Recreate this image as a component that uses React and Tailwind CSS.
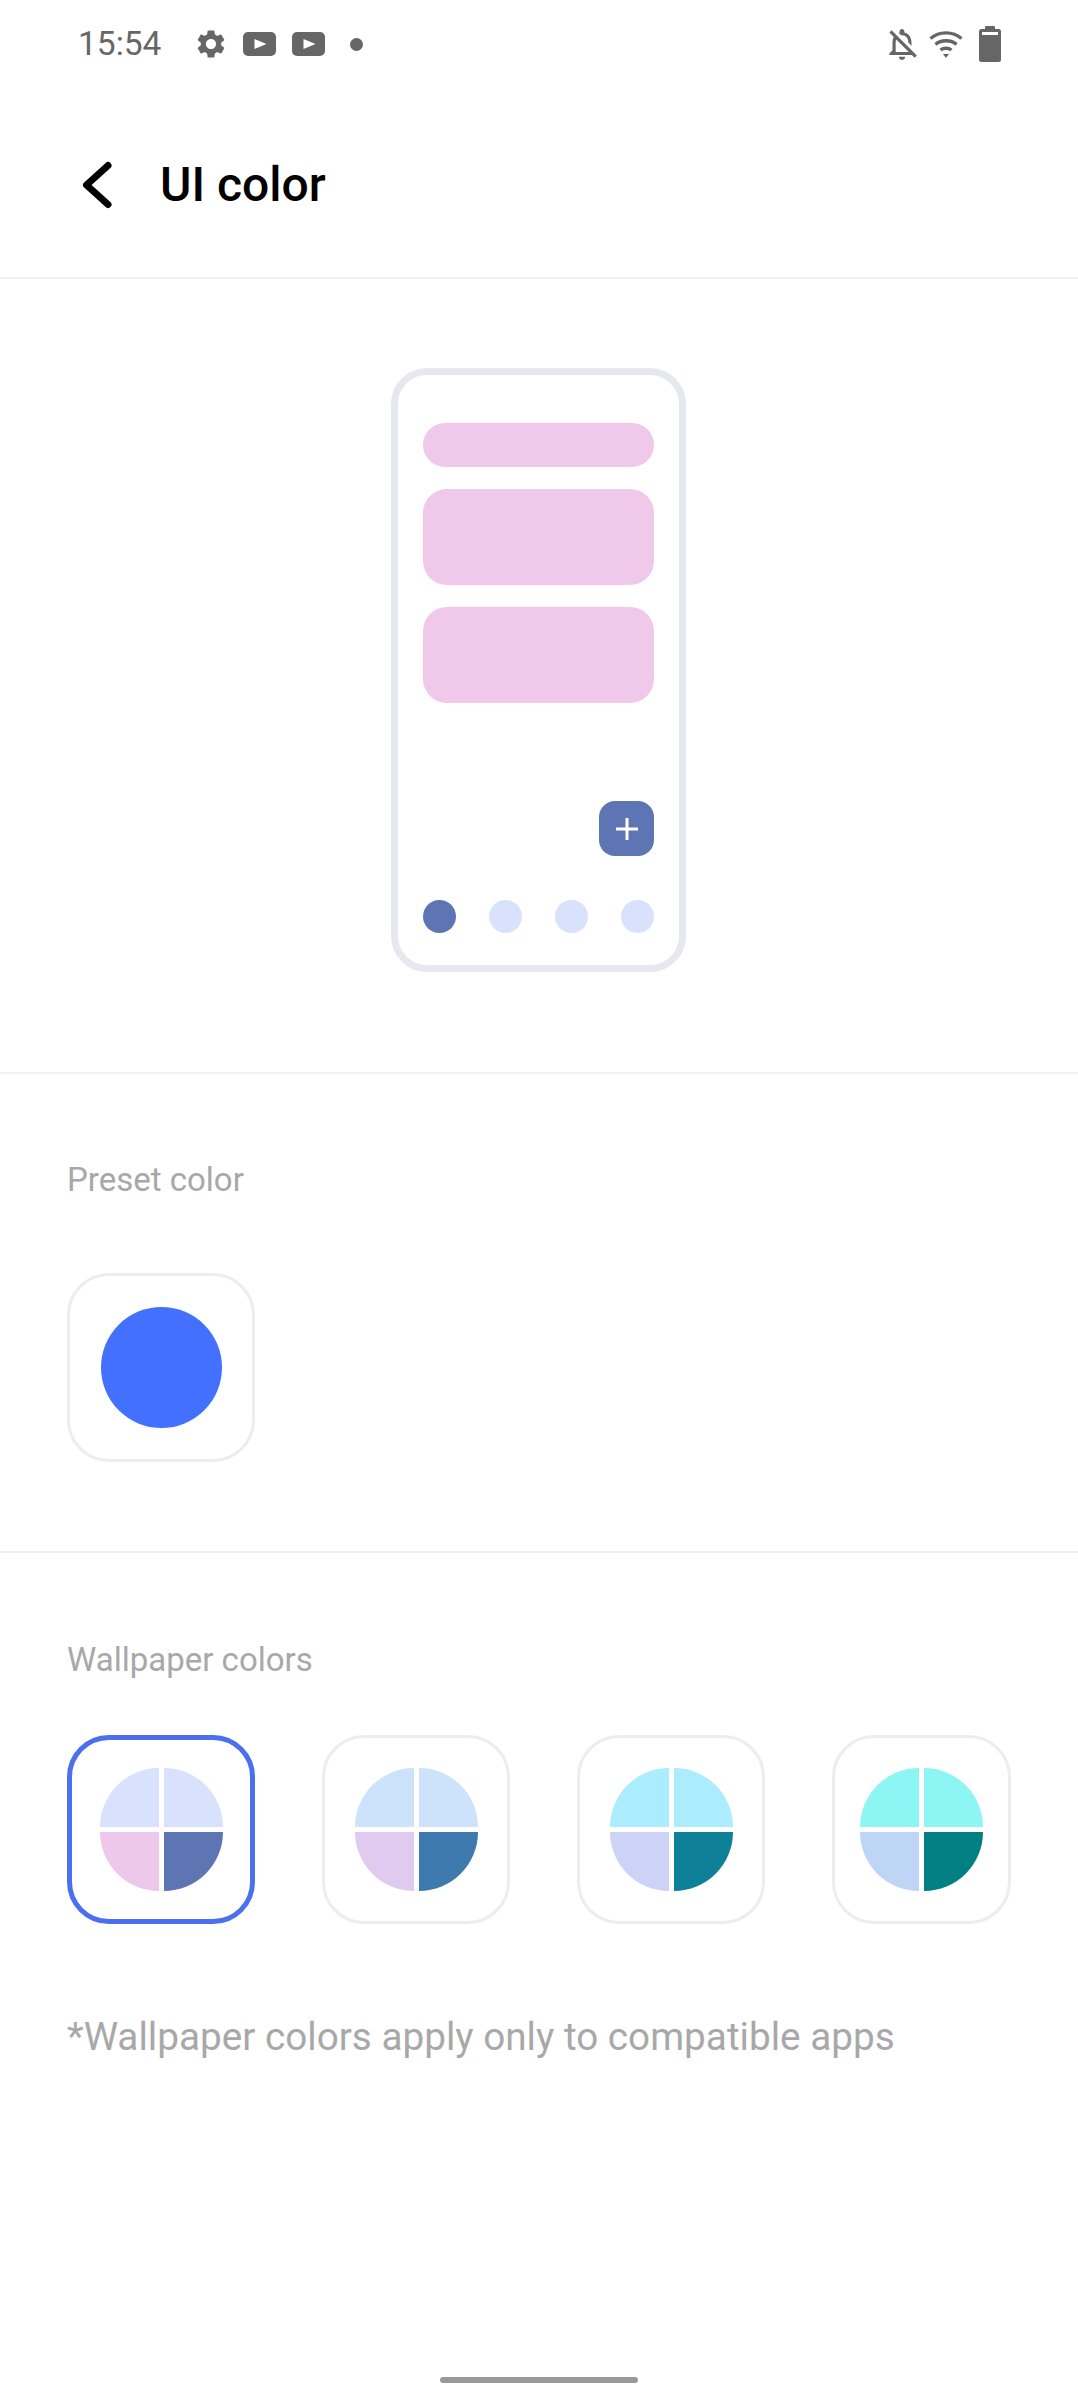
import { MdSettings, MdOutlineNotificationsOff } from "react-icons/md";

const wallpapers = [
  { top: "bg-[#d9e2fd]", left: "bg-[#eec8ea]", dark: "bg-[#5d75b2]" },
  { top: "bg-[#cde3fc]", left: "bg-[#e0caf0]", dark: "bg-[#3f7aae]" },
  { top: "bg-[#abecfe]", left: "bg-[#cdd2f7]", dark: "bg-[#0e8098]" },
  { top: "bg-[#8ef5f5]", left: "bg-[#bfd5f6]", dark: "bg-[#008083]" },
];

function YoutubeIcon() {
  return (
    <svg width="33" height="24" viewBox="0 0 33 24">
      <rect width="33" height="24" rx="5" fill="#666666" />
      <path d="M11.5 7 L23.5 12 L11.5 17 Z" fill="#ffffff" />
    </svg>
  );
}

function WifiIcon() {
  return (
    <svg width="34" height="30" viewBox="0 0 34 30" fill="none" stroke="#666666" strokeWidth="3.4">
      <path d="M1.5 9.5 C10 2 24 2 32.5 9.5" />
      <path d="M6.5 15.5 C12 10.5 22 10.5 27.5 15.5" />
      <path d="M11.5 21 C14.5 18.6 19.5 18.6 22.5 21" />
      <path d="M14 25 L20 25 L17 29 Z" fill="#666666" stroke="none" />
    </svg>
  );
}

function BatteryIcon() {
  return (
    <svg width="22" height="36" viewBox="0 0 22 36">
      <rect x="6" y="0" width="10" height="5" rx="1" fill="#666666" />
      <rect x="0" y="3" width="22" height="33" rx="2.5" fill="#666666" />
      <rect x="3" y="6" width="16" height="3" fill="#ffffff" />
    </svg>
  );
}

function StatusBar() {
  return (
    <div className="flex h-[88px] items-center pl-[78px] pr-[77px] text-[#666666]">
      <span className="w-[116px] text-[33.5px] leading-none">15:54</span>
      <div className="flex items-center">
        <MdSettings className="h-[34px] w-[34px] text-[#666666]" />
        <div className="ml-[15px] flex items-center gap-[16px]">
          <YoutubeIcon />
          <YoutubeIcon />
        </div>
        <div className="ml-[25px] h-[13px] w-[13px] rounded-full bg-[#666666]" />
      </div>
      <div className="ml-auto flex items-center">
        <MdOutlineNotificationsOff className="h-[38px] w-[38px] text-[#666666]" />
        <div className="ml-[8px]">
          <WifiIcon />
        </div>
        <div className="ml-[16px]">
          <BatteryIcon />
        </div>
      </div>
    </div>
  );
}

function Pie({ colors }) {
  return (
    <div className="grid h-[123px] w-[123px] grid-cols-2 gap-[5px]">
      <div className={`rounded-tl-full ${colors.top}`} />
      <div className={`rounded-tr-full ${colors.top}`} />
      <div className={`rounded-bl-full ${colors.left}`} />
      <div className={`rounded-br-full ${colors.dark}`} />
    </div>
  );
}

function Swatch({ selected, narrow, children }) {
  return (
    <div
      className={`flex h-[189px] items-center justify-center rounded-[42px] ${narrow ? "w-[179px]" : "w-[188px]"} ${
        selected ? "border-[5px] border-[#4a70f0]" : "border-[3px] border-[#ededed]"
      }`}
    >
      {children}
    </div>
  );
}

function PhonePreview() {
  return (
    <div className="mr-[1px] flex h-[604px] w-[295px] flex-col rounded-[36px] border-[7px] border-[#e6e8ef] px-[25px] pt-[48px]">
      <div className="h-[44px] rounded-[22px] bg-[#efc8ea]" />
      <div className="mt-[22px] h-[96px] rounded-[24px] bg-[#efc8ea]" />
      <div className="mt-[22px] h-[96px] rounded-[24px] bg-[#efc8ea]" />
      <div className="mt-[98px] flex h-[55px] w-[55px] items-center justify-center self-end rounded-[16px] bg-[#5d75b2]">
        <svg width="24" height="24" viewBox="0 0 24 24" stroke="#ffffff" strokeWidth="3">
          <path d="M1 12 H23 M12 1 V23" />
        </svg>
      </div>
      <div className="mt-[44px] flex justify-between">
        <div className="h-[33px] w-[33px] rounded-full bg-[#5d75b2]" />
        <div className="h-[33px] w-[33px] rounded-full bg-[#d9e2fd]" />
        <div className="h-[33px] w-[33px] rounded-full bg-[#d9e2fd]" />
        <div className="h-[33px] w-[33px] rounded-full bg-[#d9e2fd]" />
      </div>
    </div>
  );
}

export default function App() {
  return (
    <div className="flex h-[2400px] flex-col bg-white font-['Roboto',sans-serif]">
      <StatusBar />

      {/* Title bar */}
      <header className="flex h-[191px] items-center border-b-2 border-[#f0f0f0] pt-[5px]">
        <svg className="ml-[78px]" width="36" height="50" viewBox="0 0 36 50" fill="none" stroke="#000000" strokeWidth="7" strokeLinecap="round" strokeLinejoin="round">
          <path d="M30 5.5 L8.5 25 L30 44.5" />
        </svg>
        <h1 className="ml-[46px] text-[48px] font-medium leading-none text-black">UI color</h1>
      </header>

      {/* Preview */}
      <section className="flex h-[795px] justify-center border-b-2 border-[#f0f0f0] pt-[89px]">
        <PhonePreview />
      </section>

      {/* Preset */}
      <section className="flex h-[479px] flex-col border-b-2 border-[#f0f0f0] px-[67px] pt-[87px]">
        <h2 className="text-[33px] leading-[38px] text-[#a8a8a8]">Preset color</h2>
        <div className="mt-[74px]">
          <Swatch>
            <div className="h-[121px] w-[121px] rounded-full bg-[#4470ff]" />
          </Swatch>
        </div>
      </section>

      {/* Wallpaper colours */}
      <section className="flex flex-col px-[67px] pt-[88px]">
        <h2 className="text-[33px] leading-[38px] text-[#a8a8a8]">Wallpaper colors</h2>
        <div className="mt-[56px] flex gap-[67px]">
          {wallpapers.map((colors, i) => (
            <Swatch key={i} selected={i === 0} narrow={i === 3}>
              <Pie colors={colors} />
            </Swatch>
          ))}
        </div>
        <p className="mt-[91px] text-[38.7px] leading-[44px] text-[#a8a8a8]">*Wallpaper colors apply only to compatible apps</p>
      </section>

      {/* Gesture bar */}
      <div className="mt-auto mb-[17px] h-[6px] w-[198px] self-center rounded-full bg-[#999999]" />
    </div>
  );
}
